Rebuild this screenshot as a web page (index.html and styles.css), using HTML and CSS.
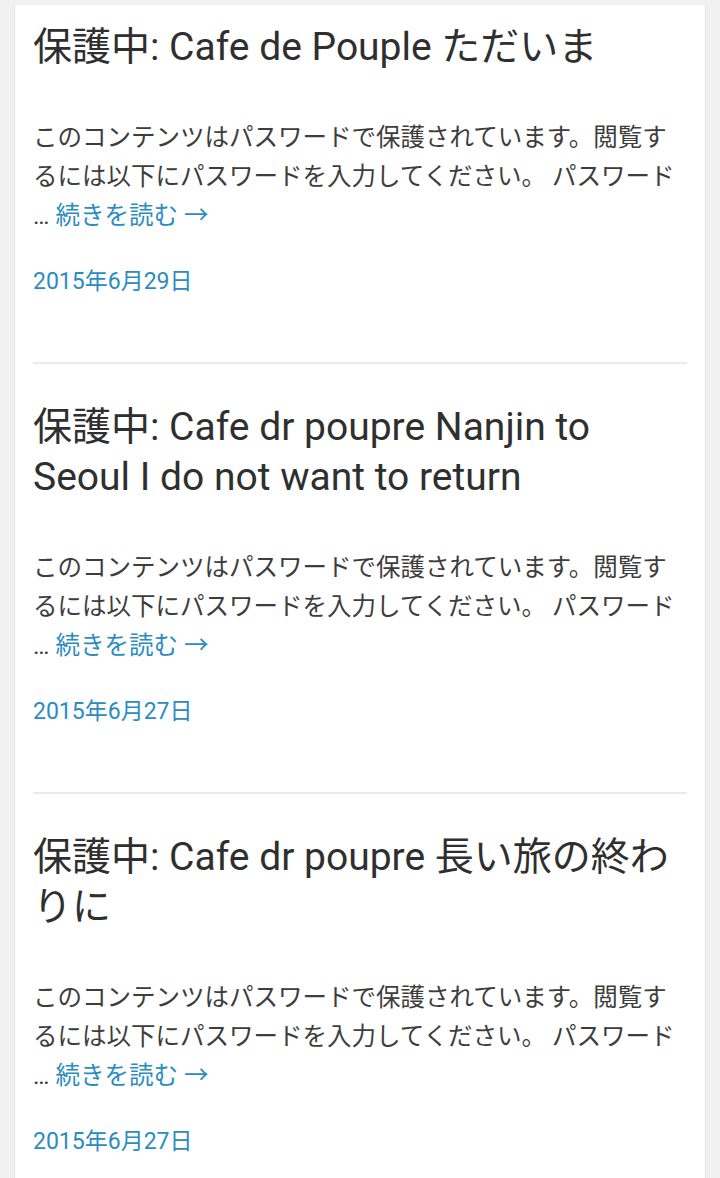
FILE: index.html
```html
<!DOCTYPE html>
<html lang="ja">
<head>
<meta charset="utf-8">
<title>Posts</title>
<link rel="stylesheet" href="styles.css">
</head>
<body>
<div class="page">
  <main class="card">
    <article class="post">
      <h2 class="post-title">保護中: Cafe de Pouple ただいま</h2>
      <p class="excerpt">このコンテンツはパスワードで保護されています。閲覧するには以下にパスワードを入力してください。 パスワード … <a class="more" href="#">続きを読む →</a></p>
      <p class="date"><a href="#">2015年6月29日</a></p>
    </article>
    <article class="post">
      <h2 class="post-title">保護中: Cafe dr poupre Nanjin to Seoul I do not want to return</h2>
      <p class="excerpt">このコンテンツはパスワードで保護されています。閲覧するには以下にパスワードを入力してください。 パスワード … <a class="more" href="#">続きを読む →</a></p>
      <p class="date"><a href="#">2015年6月27日</a></p>
    </article>
    <article class="post">
      <h2 class="post-title">保護中: Cafe dr poupre 長い旅の終わりに</h2>
      <p class="excerpt">このコンテンツはパスワードで保護されています。閲覧するには以下にパスワードを入力してください。 パスワード … <a class="more" href="#">続きを読む →</a></p>
      <p class="date"><a href="#">2015年6月27日</a></p>
    </article>
  </main>
</div>
</body>
</html>
```

FILE: styles.css
```css
html, body {
  margin: 0;
  padding: 0;
}
body {
  background: #f1f1f1;
  font-family: Roboto, "Noto Sans CJK JP", sans-serif;
  color: #333333;
  height: 1178px;
  overflow: hidden;
}
.page {
  padding: 5px 14px 0 14px;
}
.card {
  background: #ffffff;
  border-left: 1px solid #e4e4e4;
  border-right: 1px solid #e4e4e4;
  padding: 0 18px 20px 18px;
}
.post {
  padding-top: 38px;
  border-bottom: 2px solid #eaeaea;
}
.post:first-child {
  padding-top: 17px;
}
.post:last-child {
  border-bottom: none;
}
.post-title {
  margin: 0;
  font-size: 39px;
  line-height: 50px;
  font-weight: 400;
  color: #2f2f2f;
}
.excerpt {
  margin: 46px 0 0 0;
  font-size: 24.5px;
  line-height: 39px;
  color: #3d3d3d;
}
.excerpt a {
  color: #2b8cc0;
  text-decoration: none;
}
.date {
  margin: 29px 0 0 0;
  padding-bottom: 62px;
  font-size: 23px;
  line-height: 36px;
}
.date a {
  color: #2b8cc0;
  text-decoration: none;
}
```
